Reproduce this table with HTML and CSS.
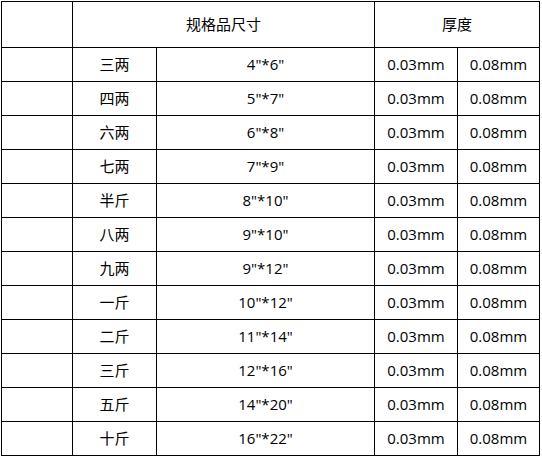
FILE: index.html
```html
<!DOCTYPE html>
<html lang="zh">
<head>
<meta charset="utf-8">
<link rel="stylesheet" href="styles.css">
</head>
<body>
<div class="sheet">
  <div class="cell"></div>
  <div class="cell span2">规格品尺寸</div>
  <div class="cell span2">厚度</div>

  <div class="cell"></div><div class="cell">三两</div><div class="cell">4"*6"</div><div class="cell">0.03mm</div><div class="cell">0.08mm</div>
  <div class="cell"></div><div class="cell">四两</div><div class="cell">5"*7"</div><div class="cell">0.03mm</div><div class="cell">0.08mm</div>
  <div class="cell"></div><div class="cell">六两</div><div class="cell">6"*8"</div><div class="cell">0.03mm</div><div class="cell">0.08mm</div>
  <div class="cell"></div><div class="cell">七两</div><div class="cell">7"*9"</div><div class="cell">0.03mm</div><div class="cell">0.08mm</div>
  <div class="cell"></div><div class="cell">半斤</div><div class="cell">8"*10"</div><div class="cell">0.03mm</div><div class="cell">0.08mm</div>
  <div class="cell"></div><div class="cell">八两</div><div class="cell">9"*10"</div><div class="cell">0.03mm</div><div class="cell">0.08mm</div>
  <div class="cell"></div><div class="cell">九两</div><div class="cell">9"*12"</div><div class="cell">0.03mm</div><div class="cell">0.08mm</div>
  <div class="cell"></div><div class="cell">一斤</div><div class="cell">10"*12"</div><div class="cell">0.03mm</div><div class="cell">0.08mm</div>
  <div class="cell"></div><div class="cell">二斤</div><div class="cell">11"*14"</div><div class="cell">0.03mm</div><div class="cell">0.08mm</div>
  <div class="cell"></div><div class="cell">三斤</div><div class="cell">12"*16"</div><div class="cell">0.03mm</div><div class="cell">0.08mm</div>
  <div class="cell"></div><div class="cell">五斤</div><div class="cell">14"*20"</div><div class="cell">0.03mm</div><div class="cell">0.08mm</div>
  <div class="cell"></div><div class="cell">十斤</div><div class="cell">16"*22"</div><div class="cell">0.03mm</div><div class="cell">0.08mm</div>
</div>
</body>
</html>
```

FILE: styles.css
```css
html, body {
  margin: 0;
  padding: 0;
  background: #fff;
}
body {
  padding: 1px 0 0 1px;
  font-family: "Open Sans", "Noto Sans CJK SC", sans-serif;
  font-size: 15px;
  color: #000;
}
.sheet {
  display: inline-grid;
  grid-template-columns: 70px 83px 217px 82px 81px;
  grid-template-rows: 45px repeat(12, 33px);
  gap: 1px;
  padding: 1px;
  background: #000;
}
.cell {
  background: #fff;
  display: flex;
  align-items: center;
  justify-content: center;
  line-height: 1;
  white-space: nowrap;
}
.span2 {
  grid-column: span 2;
}
```
